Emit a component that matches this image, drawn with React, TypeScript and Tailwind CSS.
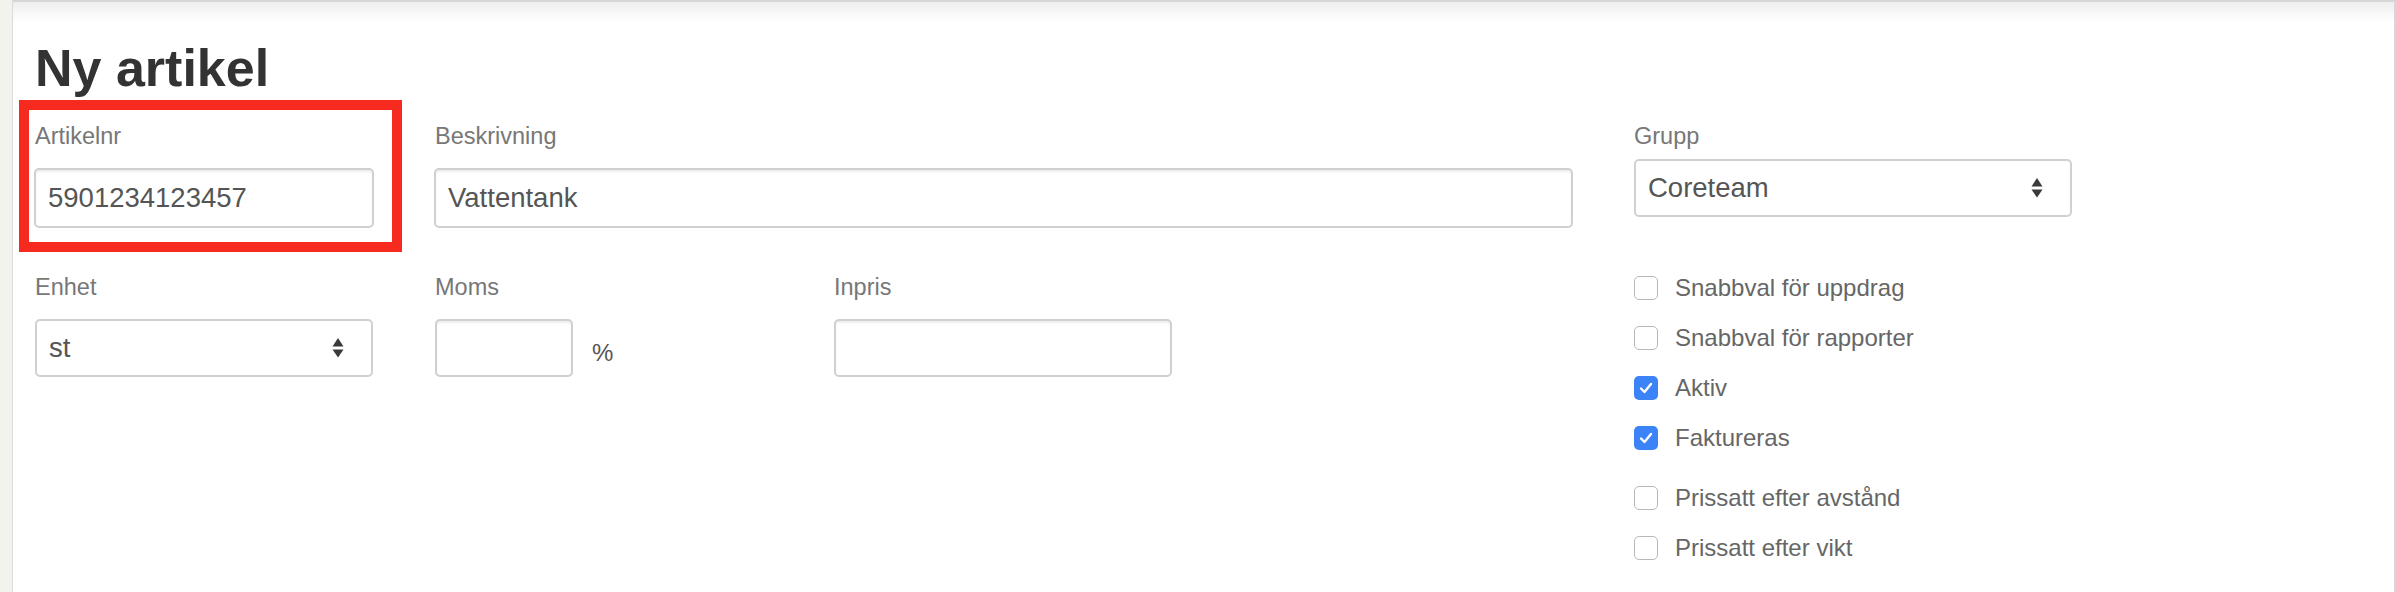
const font = { fontFamily: '"Liberation Sans", Arial, sans-serif' };

function Arrows() {
  return (
    <svg width="12" height="20" viewBox="0 0 12 20" className="shrink-0">
      <path d="M6 0 L11.5 8.5 L0.5 8.5 Z" fill="#3a3a3a" />
      <path d="M0.5 11.5 L11.5 11.5 L6 19.5 Z" fill="#3a3a3a" />
    </svg>
  );
}

function Label({ children }: { children: React.ReactNode }) {
  return <div className="text-[23.5px] leading-none text-[#777]">{children}</div>;
}

function TextBox({ value, className }: { value?: string; className: string }) {
  return (
    <div
      className={`h-[60px] border-2 border-[#d0d0d0] rounded-[5px] bg-white shadow-[inset_0_2px_2px_rgba(0,0,0,0.07)] flex items-center pl-[12px] text-[27.5px] text-[#555] ${className}`}
    >
      {value}
    </div>
  );
}

function SelectBox({ value, className }: { value: string; className: string }) {
  return (
    <div
      className={`h-[58px] border-2 border-[#d0d0d0] rounded-[5px] bg-white flex items-center justify-between pl-[12px] pr-[27px] text-[27.5px] text-[#555] ${className}`}
    >
      <span>{value}</span>
      <Arrows />
    </div>
  );
}

function Check({ label, checked }: { label: string; checked?: boolean }) {
  return (
    <div className="flex items-center h-[24px] gap-[17px]">
      {checked ? (
        <div className="w-[24px] h-[24px] rounded-[5px] bg-[#3b83f6] flex items-center justify-center">
          <svg width="16" height="16" viewBox="0 0 16 16">
            <path d="M3 8.5 L6.5 12 L13 4" fill="none" stroke="white" strokeWidth="2.4" strokeLinecap="round" strokeLinejoin="round" />
          </svg>
        </div>
      ) : (
        <div className="w-[24px] h-[24px] rounded-[5px] border-[1.5px] border-[#b9b9b9] bg-white" />
      )}
      <span className="text-[24px] leading-none text-[#666]">{label}</span>
    </div>
  );
}

export default function App() {
  return (
    <div className="flex w-[2396px] h-[592px] bg-white overflow-hidden" style={font}>
      <div className="w-[12px] h-full bg-[#f3f3ee] border-r border-[#dcdcdc] shrink-0 box-content" />
      <div className="flex-1 h-full border-t-2 border-r-2 border-[#d6d6d6] flex flex-col">
        <div className="h-[20px] bg-gradient-to-b from-[#eeeeee] to-white shrink-0" />
        <div className="flex pl-[6px]">
          {/* left block */}
          <div className="flex flex-col w-[1615px] shrink-0">
            <h1 className="mt-[20px] ml-[16px] text-[52px] leading-none font-bold text-[#333]">Ny artikel</h1>
            <div className="flex mt-[6px]">
              <div className="w-[383px] h-[152px] border-[10px] border-[#f72a1f] pt-[15px] pl-[5px] shrink-0">
                <div className="pl-[1px]">
                  <Label>Artikelnr</Label>
                </div>
                <TextBox value="5901234123457" className="w-[340px] mt-[19px]" />
              </div>
              <div className="ml-[32px] pt-[25px]">
                <div className="pl-[1px]">
                  <Label>Beskrivning</Label>
                </div>
                <TextBox value="Vattentank" className="w-[1139px] mt-[19px]" />
              </div>
            </div>
            <div className="flex mt-[24px]">
              <div className="ml-[16px] w-[338px] shrink-0">
                <Label>Enhet</Label>
                <SelectBox value="st" className="w-[338px] mt-[19px]" />
              </div>
              <div className="ml-[62px] w-[200px] shrink-0">
                <Label>Moms</Label>
                <div className="flex items-end mt-[19px]">
                  <TextBox className="w-[138px] !h-[58px]" />
                  <span className="ml-[19px] mb-[6px] text-[24px] text-[#555]">%</span>
                </div>
              </div>
              <div className="ml-[199px] w-[338px] shrink-0">
                <Label>Inpris</Label>
                <TextBox className="w-[338px] mt-[19px] !h-[58px]" />
              </div>
            </div>
          </div>
          {/* right block */}
          <div className="flex flex-col pt-[103px]">
            <Label>Grupp</Label>
            <SelectBox value="Coreteam" className="w-[438px] mt-[10px]" />
            <div className="flex flex-col gap-[26px] mt-[59px]">
              <Check label="Snabbval för uppdrag" />
              <Check label="Snabbval för rapporter" />
              <Check label="Aktiv" checked />
              <Check label="Faktureras" checked />
            </div>
            <div className="flex flex-col gap-[26px] mt-[36px]">
              <Check label="Prissatt efter avstånd" />
              <Check label="Prissatt efter vikt" />
            </div>
          </div>
        </div>
      </div>
    </div>
  );
}
